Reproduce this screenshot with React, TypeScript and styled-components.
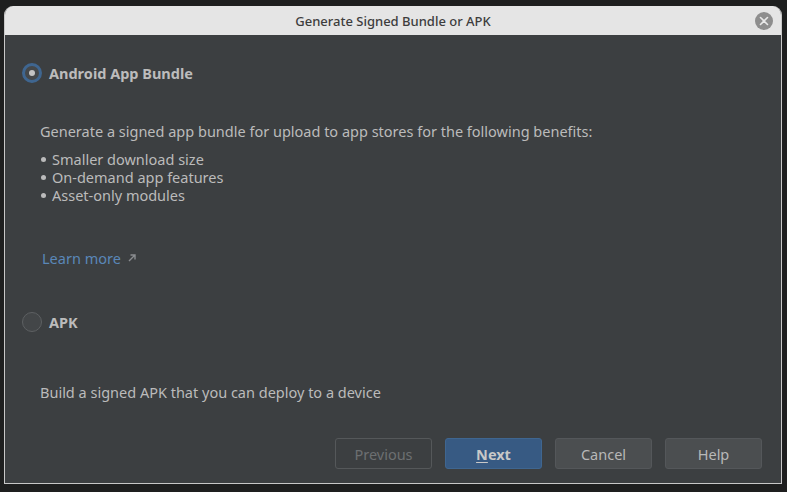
import React from "react";
import styled, { createGlobalStyle } from "styled-components";

const Global = createGlobalStyle`
  html, body { margin: 0; padding: 0; background: #1e1f1f; }
  body { width: 787px; height: 492px; overflow: hidden; font-family: "Noto Sans", "Open Sans", sans-serif; }
`;

const Screen = styled.div`
  width: 787px;
  height: 492px;
  box-sizing: border-box;
  padding: 6px 5px 8px 4px;
  display: flex;
  background: #1e1f1f;
`;

const Window = styled.div`
  flex: 1;
  display: flex;
  flex-direction: column;
  border-radius: 9px 9px 0 0;
  overflow: hidden;
  border: 1px solid #c8c8c8;
  border-top: none;
  background: #3c3f41;
`;

const TitleBar = styled.div`
  height: 29px;
  flex: none;
  background: #e5e5e5;
  display: flex;
  align-items: center;
  justify-content: center;
  position: relative;
  font-size: 13px;
  color: #3d3d3d;
  font-weight: 500;
`;

const CloseBtn = styled.div`
  position: absolute;
  right: 8px;
  top: 6px;
  width: 18px;
  height: 18px;
  border-radius: 50%;
  background: #8e8e8e;
  display: flex;
  align-items: center;
  justify-content: center;
`;

const Body = styled.div`
  flex: 1;
  display: flex;
  flex-direction: column;
  padding: 28px 0 0 17px;
  color: #bbbbbb;
`;

const OptionRow = styled.div<{ $top?: number }>`
  display: flex;
  align-items: center;
  gap: 7px;
  height: 20px;
  margin-top: ${(p) => p.$top ?? 0}px;
`;

const Radio = styled.div<{ $checked?: boolean }>`
  width: 20px;
  height: 20px;
  box-sizing: border-box;
  border-radius: 50%;
  display: flex;
  align-items: center;
  justify-content: center;
  ${(p) =>
    p.$checked
      ? `border: 3px solid #3f6690; background: #45484a;`
      : `border: 1px solid #5d6062; background: #434648;`}
`;

const Dot = styled.div`
  width: 6px;
  height: 6px;
  border-radius: 50%;
  background: #c4c4c4;
`;

const OptionLabel = styled.span`
  font-weight: 700;
  font-size: 14.5px;
  color: #bcbcbc;
`;

const Desc = styled.div<{ $top: number }>`
  margin-top: ${(p) => p.$top}px;
  padding-left: 18px;
  font-size: 14.5px;
  line-height: 18px;
  color: #bbbbbb;
`;

const List = styled.ul`
  list-style: none;
  margin: 10px 0 0;
  padding: 0 0 0 19px;
  font-size: 14.5px;
  line-height: 18px;
`;

const Item = styled.li`
  display: flex;
  align-items: center;
  gap: 6px;
  &::before {
    content: "";
    width: 5px;
    height: 5px;
    border-radius: 50%;
    background: #bbbbbb;
  }
`;

const Learn = styled.a`
  margin: 45px 0 0 20px;
  font-size: 14.5px;
  line-height: 18px;
  color: #5a87b8;
  display: flex;
  align-items: center;
  gap: 7px;
  text-decoration: none;
`;

const Spacer = styled.div`
  flex: 1;
`;

const Footer = styled.div`
  display: flex;
  justify-content: flex-end;
  gap: 13px;
  padding: 0 19px 14px 0;
`;

const Button = styled.button<{ $kind: "disabled" | "primary" | "normal" }>`
  width: 97px;
  height: 31px;
  box-sizing: border-box;
  border-radius: 3px;
  font-family: inherit;
  font-size: 14.5px;
  cursor: default;
  ${(p) =>
    p.$kind === "primary"
      ? `background: #375a83; border: 1px solid #3f6690; color: #c8c8c8; font-weight: 700;`
      : p.$kind === "disabled"
      ? `background: transparent; border: 1px solid #55585a; color: #6c6f71;`
      : `background: #4b4e50; border: 1px solid #54575a; color: #b8b8b8;`}
  u { text-decoration: underline; text-underline-offset: 2px; }
`;

export default function App() {
  return (
    <>
      <Global />
      <Screen>
        <Window>
          <TitleBar>
            Generate Signed Bundle or APK
            <CloseBtn>
              <svg width="10" height="10" viewBox="0 0 10 10">
                <path d="M1.5 1.5 L8.5 8.5 M8.5 1.5 L1.5 8.5" stroke="#e8e8e8" strokeWidth="1.6" strokeLinecap="round" />
              </svg>
            </CloseBtn>
          </TitleBar>
          <Body>
            <OptionRow>
              <Radio $checked>
                <Dot />
              </Radio>
              <OptionLabel>Android App Bundle</OptionLabel>
            </OptionRow>
            <Desc $top={39}>
              Generate a signed app bundle for upload to app stores for the following benefits:
            </Desc>
            <List>
              <Item>Smaller download size</Item>
              <Item>On-demand app features</Item>
              <Item>Asset-only modules</Item>
            </List>
            <Learn>
              Learn more
              <svg width="8" height="8" viewBox="0 0 8 8">
                <path d="M1 7 L6.5 1.5 M2.5 1 H7 V5.5" stroke="#8a8d90" strokeWidth="1.4" fill="none" />
              </svg>
            </Learn>
            <OptionRow $top={45}>
              <Radio />
              <OptionLabel>APK</OptionLabel>
            </OptionRow>
            <Desc $top={51}>Build a signed APK that you can deploy to a device</Desc>
            <Spacer />
            <Footer>
              <Button $kind="disabled">Previous</Button>
              <Button $kind="primary">
                <u>N</u>ext
              </Button>
              <Button $kind="normal">Cancel</Button>
              <Button $kind="normal">Help</Button>
            </Footer>
          </Body>
        </Window>
      </Screen>
    </>
  );
}
